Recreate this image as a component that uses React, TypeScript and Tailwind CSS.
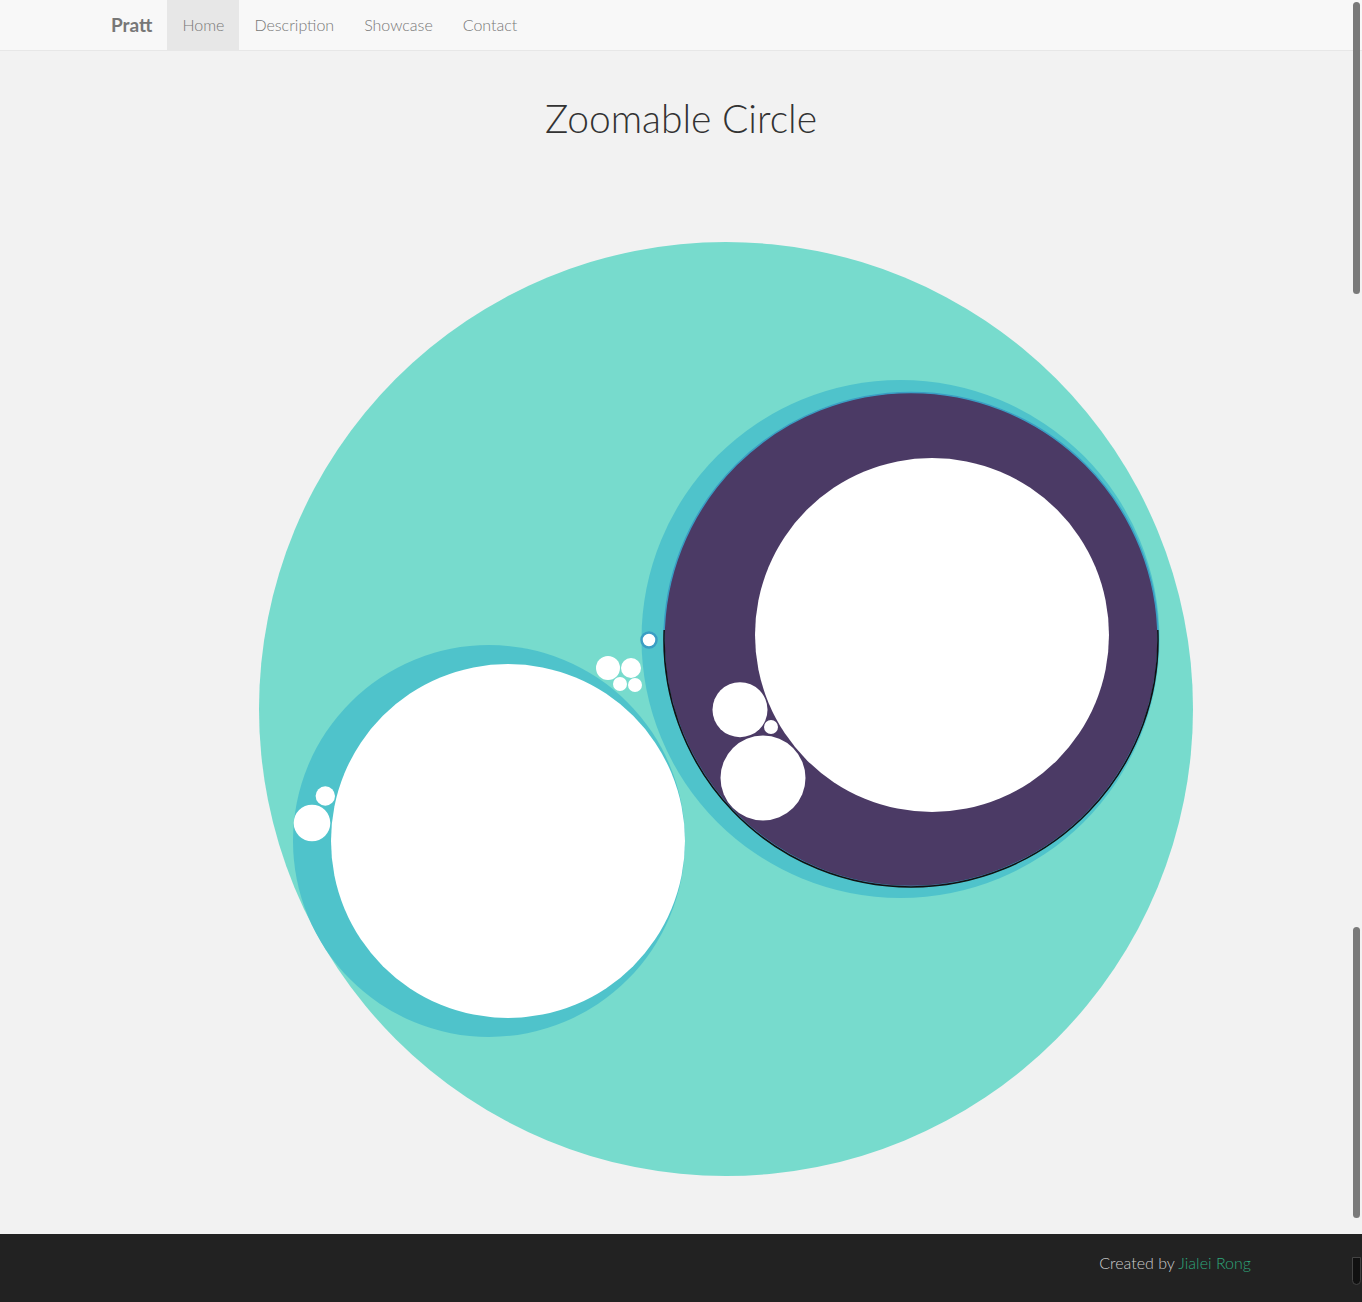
import React from "react";

const navLinks = [
  { label: "Home", active: true },
  { label: "Description" },
  { label: "Showcase" },
  { label: "Contact" },
];

// circle pack, mid-zoom; coords are page pixels (viewBox starts at the svg's top)
const smallDots = [
  { cx: 608, cy: 668, r: 12 },
  { cx: 631, cy: 668, r: 10 },
  { cx: 620, cy: 684, r: 7 },
  { cx: 635, cy: 685, r: 7 },
  { cx: 312, cy: 823, r: 18.3 },
  { cx: 325.3, cy: 796, r: 9.7 },
  { cx: 740, cy: 709.7, r: 27.5 },
  { cx: 763, cy: 778, r: 42.5 },
  { cx: 771, cy: 727, r: 7 },
];

function CirclePack() {
  return (
    <svg width="1362" height="1094" viewBox="0 140 1362 1094" className="block">
      <circle cx="726" cy="709" r="467" fill="#77dbcd" />

      {/* left group */}
      <circle cx="489" cy="841" r="196" fill="#4fc3cb" />
      <circle cx="508" cy="841" r="177" fill="#ffffff" />

      {/* right group */}
      <circle cx="900.5" cy="639" r="259" fill="#4fc3cb" />
      <circle cx="911" cy="639.5" r="247" fill="#4b3a65" stroke="#3a9ec4" strokeWidth="1.5" />
      <path d="M 664.2 630 A 247 247 0 1 0 1157.8 630" fill="none" stroke="#111111" strokeWidth="1.5" />
      <circle cx="932" cy="635" r="177" fill="#ffffff" />

      <circle cx="649" cy="640" r="7.5" fill="#ffffff" stroke="#3a9ec4" strokeWidth="2.5" />

      {smallDots.map((d, i) => (
        <circle key={i} cx={d.cx} cy={d.cy} r={d.r} fill="#ffffff" />
      ))}
    </svg>
  );
}

export default function App() {
  return (
    <div className="relative min-h-screen bg-[#f2f2f2]" style={{ fontFamily: "Lato, 'Open Sans', sans-serif" }}>
      {/* Navbar */}
      <nav className="h-[51px] bg-[#f8f8f8] border-b border-[#e7e7e7]">
        <div className="w-[1170px] mx-auto flex h-[50px]">
          <a className="px-[15px] pt-[15px] text-[19px] leading-[20px] font-bold text-[#777777]">Pratt</a>
          {navLinks.map((l) => (
            <a
              key={l.label}
              className={`px-[15px] pt-[15px] text-[16px] leading-[20px] font-light text-[#777777] ${
                l.active ? "bg-[#e7e7e7] text-[#555555]" : ""
              }`}
            >
              {l.label}
            </a>
          ))}
        </div>
      </nav>

      {/* Main */}
      <main>
        <h1 className="pt-[45px] text-center text-[39px] leading-[44px] font-light text-[#333333]">
          Zoomable Circle
        </h1>
        <CirclePack />
      </main>

      {/* Footer */}
      <footer className="h-[68px] bg-[#222222]">
        <div className="w-[1170px] mx-auto px-[15px] pt-[18px] text-right text-[16px] leading-[21px] font-light text-[#cccccc]">
          Created by <a className="text-[#2ea57a]">Jialei Rong</a>
        </div>
      </footer>

      {/* overlay scrollbars */}
      <div className="absolute left-[1353px] top-[2px] w-[7px] h-[292px] rounded-full bg-[#7a7a7a]" />
      <div className="absolute left-[1353px] top-[927px] w-[7px] h-[291px] rounded-full bg-[#7a7a7a]" />
      <div className="absolute left-[1352px] top-[1257px] w-[9px] h-[28px] rounded-b-full bg-[#111111] border border-[#444444]" />
    </div>
  );
}
